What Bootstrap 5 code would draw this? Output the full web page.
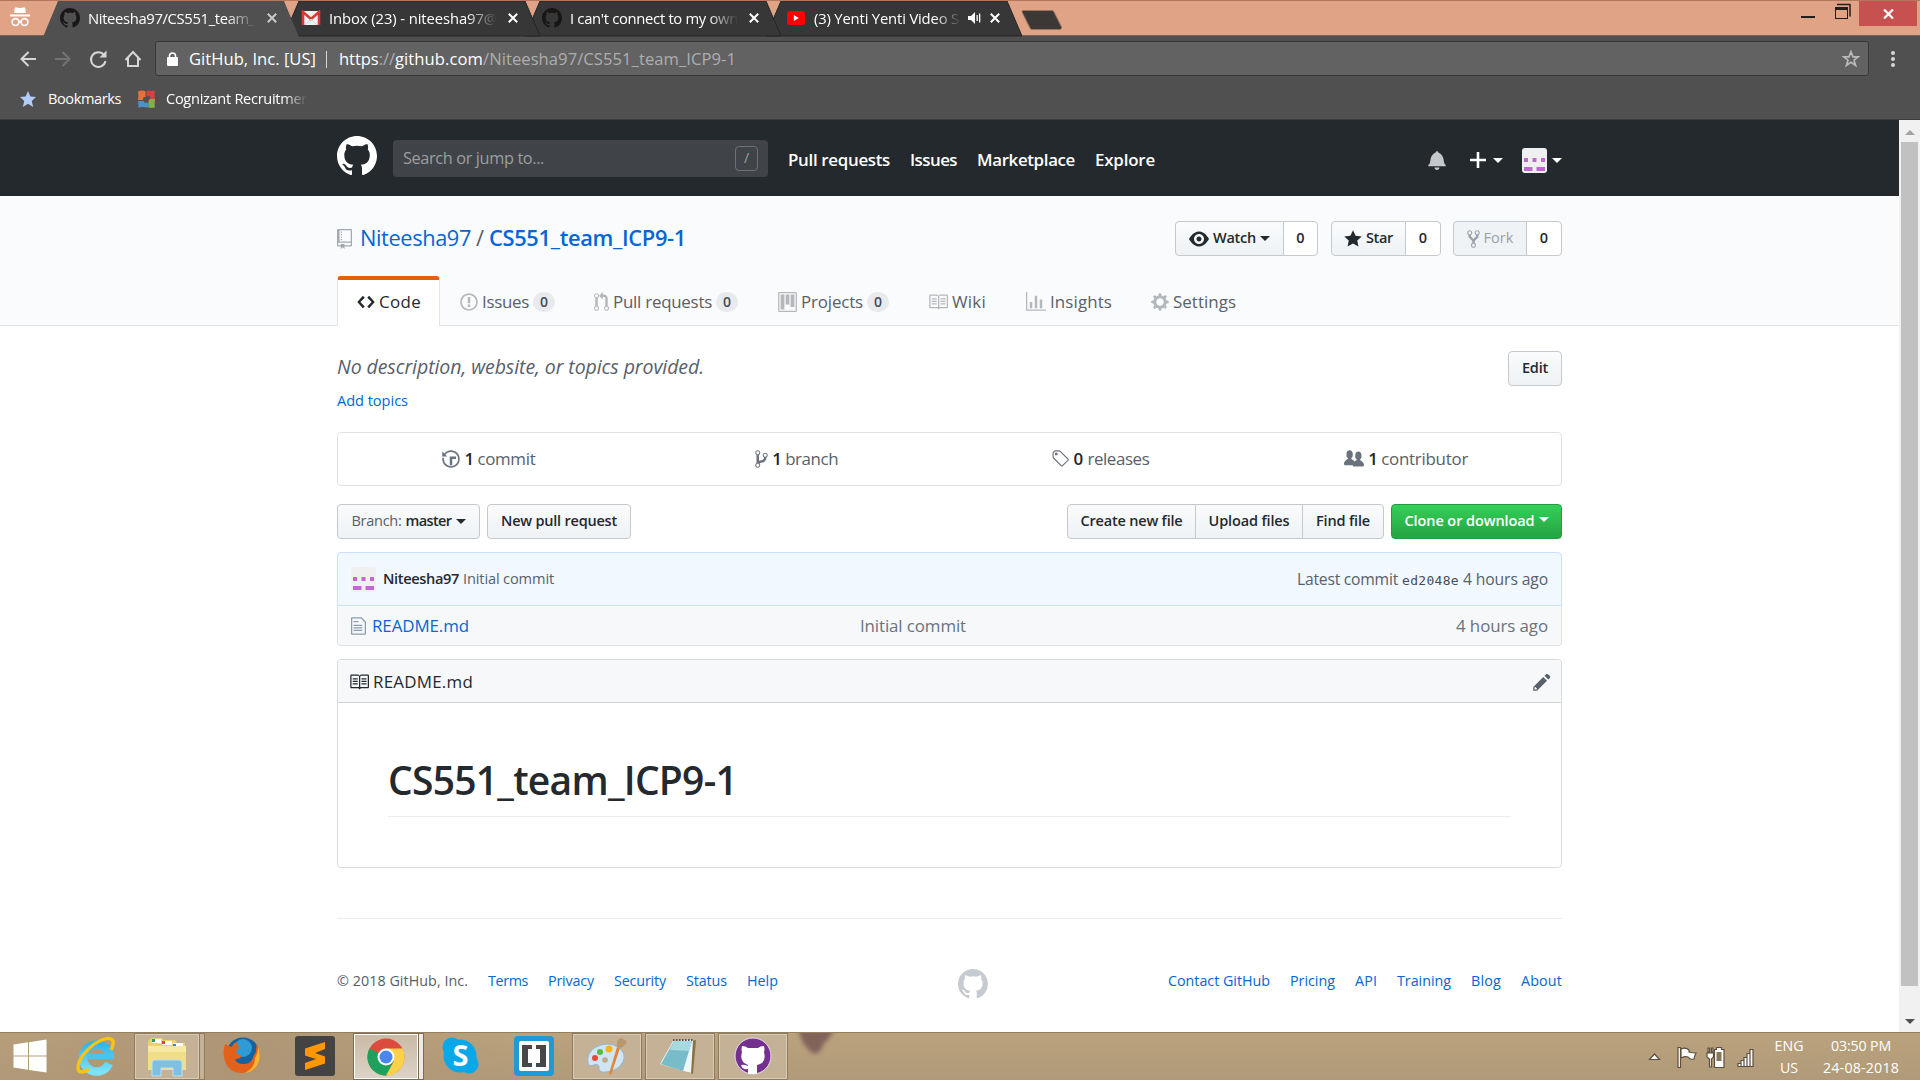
<!DOCTYPE html>
<html lang="en">
<head>
<meta charset="utf-8">
<meta name="viewport" content="width=device-width, initial-scale=1">
<title>Niteesha97/CS551_team_ICP9-1</title>
<link href="https://cdn.jsdelivr.net/npm/bootstrap@5.3.0/dist/css/bootstrap.min.css" rel="stylesheet">
<style>
  body{width:1920px;height:1080px;overflow:hidden;font-family:"Open Sans","Noto Sans",sans-serif;font-stretch:94%;font-size:17px;line-height:1.5;color:#24292e;background:#fff}
  a{text-decoration:none;color:#0366d6}
  svg{display:block;flex:none}
  .fit{display:inline-block;white-space:nowrap;flex:none}
  .semi{font-weight:600}
  .oct{fill:currentColor}
  .gap-20{gap:20px}
  .ms-3px{margin-left:3px}.ms-7{margin-left:7px}.ms-12{margin-left:12px}.ms-13{margin-left:13px}.me-7{margin-right:6px}
  .w35{width:35px}.w36{width:36px}.w54{width:54px}.w70{width:70px}.w74{width:74px}.w75{width:75px}.w82{width:82px}.w108{width:108px}.w109{width:109px}.w129{width:129px}.w143{width:143px}.w144{width:144px}.w171{width:171px}

  /* browser frame */
  .strip{height:36px;background:#e1a386;border-top:1px solid #b5775c;border-bottom:1px solid #7c6355}
  .ghost{width:43px;padding:5px 0 0 10px;flex:none}
  .ctab{width:256px;height:35px;margin-right:-15px;padding:0 22px 1px 17px;font-size:14.8px;color:#fff;position:relative;flex:none}
  .ctab>*{position:relative}
  .ctab .shape{position:absolute;left:0;top:0}
  .ctab .ico{width:28px;flex:none}
  .ctab .lbl{width:168px;overflow:hidden;white-space:nowrap;-webkit-mask-image:linear-gradient(90deg,#000 82%,transparent);flex:none}
  .ctab .lbl.short{width:147px}
  .newtab{width:42px;height:20px;margin:9px 0 0 14px}
  .winctl{height:25px;margin-right:3px}
  .closebtn{width:58px;height:25px;background:#c75050}
  .bar{height:48px;background:#505050;padding:5px 0 8px 20px;color:#fff}
  .bar .navbtns{margin-right:13px}
  .omni{width:1714px;height:35px;background:#626262;border:1px solid #373737;border-radius:3px;font-size:16.6px;padding:1px 0 0 11px}
  .omni .dim{color:#aeaeae}
  .omni .host{margin-left:10px}
  .omni .sep{margin:8px 12px 8px 10px;background:#fff;opacity:.75}
  .kebab{margin-left:22px}
  .marks{height:36px;background:#505050;color:#fff;font-size:14.6px;padding:0 0 5px 20px;border-bottom:1px solid #3c3c3c}
  .fade-end{-webkit-mask-image:linear-gradient(90deg,#000 84%,transparent);margin-left:10px}

  /* page */
  .view{height:912px}
  .pg{width:1899px}
  .wrap1225{width:1225px;margin-left:337px}
  .top-nav{height:76px;background:#24292e;color:#fff}
  .top-nav nav{font-size:16.9px;margin-left:20px}
  .jump{width:375px;height:37px;background:#404448;border-radius:4px;color:#9b9ea1;font-size:16.3px;padding:0 10px;margin-bottom:4px}
  .slashkey{width:23px;height:25px;border:1px solid #6d7174;border-radius:4px;font-size:14px;line-height:22px;text-align:center}
  .caret5{width:0;height:0;border:5px solid transparent;border-top-color:currentColor;border-bottom:0;flex:none}
  .me-face{margin-left:19px;margin-right:5px}
  .head{background:#fafbfc;height:130px;border-bottom:1px solid #e1e4e8}
  .title-row{padding-top:25px}
  .title-row h1{font-size:21.8px}
  .title-row .sl{margin:0 5px}
  .gb{height:35px;display:inline-flex;align-items:center;justify-content:center;border:1px solid #c5c9cd;border-radius:4px;background:linear-gradient(#fafbfc,#eff3f6 90%);font-size:14.5px;font-weight:600;color:#24292e;line-height:1}
  .gb.lj{border-radius:4px 0 0 4px}.gb.mj{border-radius:0;margin-left:-1px}.gb.rj{border-radius:0 4px 4px 0;margin-left:-1px}
  .gb.plain{background:#fff}
  .gb.off{background:#eff3f6;color:#9ba1a7}
  .gb.go{background:linear-gradient(#34d058,#28a745 90%);color:#fff;border-color:#269a42}
  .rtabs{height:49px}
  .rt{color:#586069;height:49px;font-size:16.9px;padding-top:3px;flex:none}
  .rt svg{color:#b5b8bb}
  .rt.on{width:103px;height:50px;border:1px solid #e1e4e8;border-top:4px solid #e36209;border-bottom:0;border-radius:4px 4px 0 0;background:#fff;color:#24292e;padding:0 0 2px 19px}
  .rt.on svg{color:#24292e}
  .rt-a{margin-left:20px}.rt-b{margin-left:39px}.rt-c{margin-left:40px}.rt-d{margin-left:39px}.rt-e{margin-left:40px}.rt-f{margin-left:39px}
  .cnt{width:22px;height:20px;border-radius:20px;background:#e8eaed;color:#444d56;font-size:14px;font-weight:600;line-height:19px;text-align:center}
  .muted5{color:#586069}.muted6{color:#6a737d}
  .desc{height:106px;padding-top:25px}
  .dline{font-size:19.5px;line-height:32px}
  .tline{font-size:14.6px;line-height:34px}
  .stats{height:54px;border:1px solid #dfe2e5;border-radius:4px;font-size:16.9px}
  .actions{padding:18px 0 13px}
  .tease{height:54px;background:#f1f8ff;border:1px solid #c8e1ff;border-radius:4px 4px 0 0;padding:0 13px;font-size:14.6px}
  .late{font-size:15.7px;padding-top:2px}
  .sha{font-family:"DejaVu Sans Mono",monospace;font-size:13px;color:#444d56}
  .filerow{height:40px;background:#f6f8fa;border:1px solid #dfe2e5;border-top:0;border-radius:0 0 4px 4px;padding:1px 13px 0;font-size:16.9px}
  .fname{width:488px}
  .rbox{height:209px;margin-top:13px;border:1px solid #d9dcdf;border-radius:4px}
  .rhead{height:43px;background:#f6f8fa;border-bottom:1px solid #d1d5da;padding:1px 10px 0 11px;font-size:16.9px;border-radius:4px 4px 0 0}
  .rtitle{margin:0 50px;height:114px;border-bottom:1px solid #eaecef;padding-top:51px;font-size:39px;line-height:52px}
  .foot{margin-top:50px;height:124px;font-size:14.3px;border-top:1px solid #eaecef}
  .flogo{margin-top:7px}
  .sbar{width:21px;height:912px;background:#f1f1f1}
  .thumb{width:17px;height:844px;background:#c1c1c1}

  /* taskbar */
  .task{height:48px;border-top:1px solid #94805f;background:radial-gradient(circle at 230px 40px,#ae9575,transparent 300px),linear-gradient(180deg,#baa27d,#b19a79);color:#fff}
  .slot{height:47px;flex:none}
  .slot.run{background:#c5b196;border:1px solid #8e7b60;box-shadow:inset 0 0 0 1px #d8cab4}
  .slot.live{background:linear-gradient(#c9baa4,#dcd3c7);border:1px solid #7d6b53;box-shadow:inset 0 0 0 1px #fff}
  .w66{width:66px}
  .edge{width:5px;height:47px;border:1px solid #8e7b60;border-left:0;background:#c5b196;flex:none}
  .edge.live2{background:#efe9e0;border-color:#7d6b53}
  .clock{font-size:14.2px;line-height:22px;text-align:center;padding-top:1px}
  .c1{margin-left:11px;width:44px}
  .c2{margin-left:10px;width:80px;margin-right:19px}
</style>
<script src="https://cdn.jsdelivr.net/npm/bootstrap@5.3.0/dist/js/bootstrap.bundle.min.js"></script>
</head>
<body>
<svg width="0" height="0" class="position-absolute">
  <symbol id="mark-gh" viewBox="0 0 16 16"><path fill-rule="evenodd" d="M8 0C3.58 0 0 3.58 0 8c0 3.54 2.29 6.53 5.47 7.59.4.07.55-.17.55-.38 0-.19-.01-.82-.01-1.49-2.01.37-2.53-.49-2.69-.94-.09-.23-.48-.94-.82-1.13-.28-.15-.68-.52-.01-.53.63-.01 1.08.58 1.23.82.72 1.21 1.87.87 2.33.66.07-.52.28-.87.51-1.07-1.78-.2-3.64-.89-3.64-3.95 0-.87.31-1.59.82-2.15-.08-.2-.36-1.02.08-2.12 0 0 .67-.21 2.2.82.64-.18 1.32-.27 2-.27.68 0 1.36.09 2 .27 1.53-1.04 2.2-.82 2.2-.82.44 1.1.16 1.92.08 2.12.51.56.82 1.27.82 2.15 0 3.07-1.87 3.75-3.65 3.95.29.25.54.73.54 1.48 0 1.07-.01 1.93-.01 2.2 0 .21.15.46.55.38A8.013 8.013 0 0 0 16 8c0-4.42-3.58-8-8-8z"/></symbol>
  <symbol id="repo" viewBox="0 0 12 16"><path fill-rule="evenodd" d="M4 9H3V8h1v1zm0-3H3v1h1V6zm0-2H3v1h1V4zm0-2H3v1h1V2zm8-1v12c0 .55-.45 1-1 1H6v2l-1.5-1.5L3 16v-2H1c-.55 0-1-.45-1-1V1c0-.55.45-1 1-1h10c.55 0 1 .45 1 1zm-1 10H1v2h2v-1h3v1h5v-2zm0-10H2v9h9V1z"/></symbol>
  <symbol id="book" viewBox="0 0 16 16"><path fill-rule="evenodd" d="M3 5h4v1H3V5zm0 3h4V7H3v1zm0 2h4V9H3v1zm11-5h-4v1h4V5zm0 2h-4v1h4V7zm0 2h-4v1h4V9zm2-6v9c0 .55-.45 1-1 1H9.5l-1 1-1-1H2c-.55 0-1-.45-1-1V3c0-.55.45-1 1-1h5.5l1 1 1-1H15c.55 0 1 .45 1 1zm-8 .5L7.5 3H2v9h6V3.5zm7-.5H9.5l-.5.5V12h6V3z"/></symbol>
  <symbol id="ident" viewBox="0 0 25 25"><rect width="25" height="25" rx="3" fill="#f0f0f0"/><path fill="#c266d6" d="M2 10h4v4H2zM10.500 10h4v4h-4zM19 10h4v4h-4zM2 19h8.500v4H2zM14.500 19H23v4h-8.500z"/></symbol>
  <symbol id="tabx" viewBox="0 0 10 10"><path d="M.8.8l8.400 8.400M9.200.8L.8 9.200" stroke="currentColor" stroke-width="2" fill="none"/></symbol>
</svg>

<!-- tab strip -->
<div class="strip d-flex">
  <div class="ghost"><svg width="20" height="22" viewBox="0 0 20 22" fill="#fff"><path d="M5 1.500h2.500l2.500.8 2.500-.8H15l1 5.500H4zM0 8.500h20v2H0z"/><g fill="none" stroke="#fff" stroke-width="1.600"><circle cx="5.500" cy="16" r="3.400"/><circle cx="14.500" cy="16" r="3.400"/><path d="M8.500 15.500h3"/></g></svg></div>
  <div class="ctab d-flex align-items-center z-3"><svg class="shape" width="256" height="36"><path d="M0 36L15 0H241L256 36Z" fill="#505050"/></svg>
    <span class="ico"><svg width="20" height="20" fill="#1b1717"><use href="#mark-gh"/></svg></span><span class="lbl"><span class="fit" data-w="167">Niteesha97/CS551_team_</span></span><svg class="ms-auto" width="10" height="10" color="#c8c8c8"><use href="#tabx"/></svg></div>
  <div class="ctab d-flex align-items-center z-2"><svg class="shape" width="256" height="36"><path d="M0 35L15 0H241L256 35Z" fill="#373737" stroke="#262626"/></svg>
    <span class="ico"><svg width="20" height="16" viewBox="0 0 20 16"><rect x="1" y="1" width="18" height="14" rx="1" fill="#f2f2f2"/><path d="M2 15V2l8 7 8-7v13" fill="none" stroke="#d93a31" stroke-width="2.600"/><path d="M4 15l6-6 6 6" fill="none" stroke="#d5d5d5"/></svg></span><span class="lbl"><span class="fit" data-w="168">Inbox (23) - niteesha97@</span></span><svg class="ms-auto" width="10" height="10"><use href="#tabx"/></svg></div>
  <div class="ctab d-flex align-items-center z-1"><svg class="shape" width="256" height="36"><path d="M0 35L15 0H241L256 35Z" fill="#373737" stroke="#262626"/></svg>
    <span class="ico"><svg width="20" height="20" fill="#181515"><use href="#mark-gh"/></svg></span><span class="lbl"><span class="fit" data-w="168">I can't connect to my own</span></span><svg class="ms-auto" width="10" height="10"><use href="#tabx"/></svg></div>
  <div class="ctab d-flex align-items-center"><svg class="shape" width="256" height="36"><path d="M0 35L15 0H241L256 35Z" fill="#373737" stroke="#262626"/></svg>
    <span class="ico ps-1"><svg width="18" height="14" viewBox="0 0 18 14"><rect width="18" height="14" rx="3" fill="#f00"/><path d="M6.800 4v6l5-3z" fill="#fff"/></svg></span><span class="lbl short ms-3px"><span class="fit" data-w="145">(3) Yenti Yenti Video S</span></span>
    <svg class="ms-7" width="13" height="12" viewBox="0 0 13 12" fill="#fff"><path d="M0 4h3l4-4v12L3 8H0zM8.500 3h1.300v6H8.500zM11 1.500h1.300v9H11z"/></svg><svg class="ms-auto" width="10" height="10"><use href="#tabx"/></svg></div>
  <svg class="newtab" viewBox="0 0 42 20"><path d="M2 .5h29q1.500 0 2 1.500l7.500 15q.5 2-1.500 2.500H11q-1.500 0-2-1.500L1 2Q.5.5 2 .5z" fill="#3b3836" stroke="#9a7260"/></svg>
  <div class="winctl ms-auto d-flex">
    <svg width="58" height="25" viewBox="0 0 58 25"><path d="M0 15h14v2H0z" fill="#1e1e1e"/><g fill="none" stroke="#1e1e1e"><rect x="34.500" y="6.500" width="12" height="11"/><path d="M34 7.500h13" stroke-width="3"/><path d="M36 3.500h13.500M49 3v12.500" stroke-width="1.500"/></g></svg>
    <div class="closebtn d-flex align-items-center justify-content-center"><svg width="11" height="10" viewBox="0 0 11 10"><path d="M1 .5l9 9M10 .5l-9 9" stroke="#fff" stroke-width="2.200"/></svg></div>
  </div>
</div>

<!-- address bar -->
<div class="bar d-flex align-items-center">
  <svg class="navbtns" width="122" height="20" viewBox="0 0 122 20" fill="none" stroke-width="2">
    <path d="M16 10H1.500M8.500 3l-7 7 7 7" stroke="#d6d6d6"/><path d="M35 10h14.500M42.500 3l7 7-7 7" stroke="#737373"/>
    <path d="M84 6a7.300 7.300 0 1 0 1.500 6" stroke="#d6d6d6"/><path d="M86.500 1.500v7h-7z" fill="#d6d6d6"/><path d="M105.500 11l7.500-8 7.500 8M108 9v8h10V9" stroke="#d6d6d6"/></svg>
  <div class="omni d-flex align-items-center">
    <svg width="12" height="14" viewBox="0 0 12 14"><rect y="5" width="11" height="9" rx="1" fill="#fff"/><path d="M2.500 6V4a3 3 0 0 1 6 0v2" fill="none" stroke="#fff" stroke-width="1.600"/></svg>
    <span class="fit host" data-w="127">GitHub, Inc. [US]</span>
    <span class="vr sep"></span>
    <span class="fit" data-w="56"><span>https</span><span class="dim">://</span></span><span class="fit" data-w="88">github.com</span><span class="fit dim" data-w="253">/Niteesha97/CS551_team_ICP9-1</span>
    <svg class="ms-auto me-2" width="18" height="18" viewBox="0 0 18 18"><path d="M9 1.800l2 5h5.200l-4.200 3.400 1.600 5.300L9 12.300l-4.600 3.200L6 10.200 1.800 6.800H7z" fill="none" stroke="#b9b9b9" stroke-width="1.700"/></svg>
  </div>
  <svg class="kebab" width="4" height="18" viewBox="0 0 4 18" fill="#d6d6d6"><circle cx="2" cy="3" r="2"/><circle cx="2" cy="9" r="2"/><circle cx="2" cy="15" r="2"/></svg>
</div>
<div class="marks d-flex align-items-center">
  <svg width="16" height="16" viewBox="0 0 14 14"><path d="M14 5.200l-4.900-.4L7 0 4.900 4.800 0 5.200l3.700 3.500L2.500 14 7 11.100 11.500 14l-1.200-5.300z" fill="#b3cdf7"/></svg>
  <span class="fit ms-12" data-w="73">Bookmarks</span>
  <svg class="ms-3" width="19" height="20" viewBox="0 0 20 20"><path d="M1 2q4-2 8 0v6H7l-1 3H1q1-4 0-9z" fill="#e2743a"/><path d="M10 1q5 1 9 0-1 4 0 9h-5V7h-4z" fill="#d5413c"/><path d="M13 10h6q-1 5 0 9-3 1-7 0v-6z" fill="#7fb04a"/><path d="M1 12h6l1 2h4v5q-6-1-11 0 1-3 0-7z" fill="#4a93c8"/></svg>
  <span class="fit fade-end" data-w="141">Cognizant Recruitmer</span>
</div>

<div class="view d-flex">
  <main class="pg">
    <!-- site header -->
    <header class="top-nav">
      <div class="wrap1225 d-flex align-items-center h-100 pt-1">
        <svg width="40" height="40" fill="#fff" class="mb-2"><use href="#mark-gh"/></svg>
        <div class="jump d-flex align-items-center ms-3"><span class="fit" data-w="141">Search or jump to...</span><span class="slashkey ms-auto">/</span></div>
        <nav class="d-flex semi gap-20"><span class="fit" data-w="102">Pull requests</span><span class="fit" data-w="47">Issues</span><span class="fit" data-w="98">Marketplace</span><span class="fit" data-w="60">Explore</span></nav>
        <div class="d-flex align-items-center ms-auto">
          <svg class="oct" width="18" height="20" viewBox="0 0 14 16" color="#c5c8ca"><path d="M14 12v1H0v-1l.73-.58c.77-.77.81-2.550 1.190-4.420C2.690 3.230 6 2 6 2c0-.55.45-1 1-1s1 .45 1 1c0 0 3.390 1.230 4.160 5 .38 1.880.42 3.660 1.190 4.420l.66.58H14zm-7 4c1.110 0 2-.89 2-2H5c0 1.110.89 2 2 2z"/></svg>
          <svg class="ms-4" width="16" height="16" viewBox="0 0 16 16"><path d="M8 0v16M0 8h16" stroke="#fff" stroke-width="2.600"/></svg><span class="caret5 ms-7"></span>
          <svg class="me-face" width="25" height="25"><use href="#ident"/></svg><span class="caret5"></span>
        </div>
      </div>
    </header>

    <!-- repository head -->
    <section class="head">
      <div class="wrap1225 d-flex flex-column justify-content-between h-100">
        <div class="title-row d-flex align-items-center">
          <svg class="oct" width="15" height="20" color="#a3a9af"><use href="#repo"/></svg>
          <h1 class="d-flex align-items-baseline mb-0 fw-normal ms-2"><a class="fit" data-w="111" href="#">Niteesha97</a><span class="muted5 sl">/</span><a class="fit semi" data-w="197" href="#">CS551_team_ICP9-1</a></h1>
          <div class="d-flex ms-auto">
            <span class="gb lj w109"><svg class="oct me-1" width="20" height="20" viewBox="0 0 16 16"><path fill-rule="evenodd" d="M8.060 2C3 2 0 8 0 8s3 6 8.060 6C13 14 16 8 16 8s-3-6-7.940-6zM8 12c-2.200 0-4-1.780-4-4 0-2.200 1.800-4 4-4 2.220 0 4 1.800 4 4 0 2.220-1.780 4-4 4zm2-4c0 1.110-.89 2-2 2-1.110 0-2-.89-2-2 0-1.110.89-2 2-2 1.110 0 2 .89 2 2z"/></svg><span class="fit" data-w="43">Watch</span><span class="caret5 ms-1"></span></span><span class="gb rj plain w35">0</span>
            <span class="gb lj w75 ms-13"><svg class="oct me-1" width="18" height="20" viewBox="0 0 14 16"><path d="M14 6l-4.900-.64L7 1 4.900 5.360 0 6l3.600 3.260L2.670 14 7 11.670 11.330 14l-.93-4.740z"/></svg><span class="fit" data-w="27">Star</span></span><span class="gb rj plain w36">0</span>
            <span class="gb lj off w74 ms-12"><svg class="oct me-1" width="13" height="20" viewBox="0 0 10 16"><path fill-rule="evenodd" d="M8 1a1.993 1.993 0 0 0-1 3.720V6L5 8 3 6V4.720A1.993 1.993 0 0 0 2 1a1.993 1.993 0 0 0-1 3.720V6.500l3 3v1.780A1.993 1.993 0 0 0 5 15a1.993 1.993 0 0 0 1-3.720V9.500l3-3V4.720A1.993 1.993 0 0 0 8 1zM2 4.200C1.340 4.200.8 3.650.8 3c0-.65.55-1.200 1.200-1.200.65 0 1.200.55 1.200 1.200 0 .65-.55 1.200-1.200 1.200zm3 10c-.66 0-1.200-.55-1.200-1.200 0-.65.55-1.200 1.200-1.200.65 0 1.200.55 1.200 1.200 0 .65-.55 1.200-1.200 1.200zm3-10c-.66 0-1.200-.55-1.200-1.200 0-.65.55-1.200 1.200-1.200.65 0 1.200.55 1.200 1.200 0 .65-.55 1.200-1.200 1.200z"/></svg><span class="fit fw-normal" data-w="30">Fork</span></span><span class="gb rj plain w36">0</span>
          </div>
        </div>
        <nav class="rtabs d-flex">
          <span class="rt on d-flex align-items-center"><svg class="oct me-1" width="18" height="20" viewBox="0 0 14 16"><path d="M9.500 3L8 4.500 11.500 8 8 11.500 9.500 13 14 8 9.500 3zm-5 0L0 8l4.500 5L6 11.500 2.500 8 6 4.500 4.500 3z"/></svg><span class="fit" data-w="42">Code</span></span>
          <span class="rt d-flex align-items-center rt-a"><svg class="oct me-1" width="18" height="20" viewBox="0 0 14 16"><path fill-rule="evenodd" d="M7 2.300c3.140 0 5.700 2.560 5.700 5.700s-2.560 5.700-5.700 5.700A5.710 5.710 0 0 1 1.300 8c0-3.140 2.560-5.700 5.700-5.700zM7 1C3.140 1 0 4.140 0 8s3.140 7 7 7 7-3.140 7-7-3.140-7-7-7zm1 3H6v5h2V4zm0 6H6v2h2v-2z"/></svg><span class="fit" data-w="47">Issues</span><span class="cnt ms-1">0</span></span>
          <span class="rt d-flex align-items-center rt-b"><svg class="oct me-1" width="15" height="20" viewBox="0 0 12 16"><path fill-rule="evenodd" d="M11 11.280V5c-.03-.78-.34-1.470-.94-2.060C9.460 2.350 8.780 2.030 8 2H7V0L4 3l3 3V4h1c.27.02.48.11.69.31.21.2.3.42.31.69v6.280A1.993 1.993 0 0 0 10 15a1.993 1.993 0 0 0 1-3.720zm-1 2.920c-.66 0-1.200-.55-1.200-1.200 0-.65.55-1.200 1.200-1.200.65 0 1.200.55 1.200 1.200 0 .65-.55 1.200-1.200 1.200zM4 3c0-1.110-.89-2-2-2a1.993 1.993 0 0 0-1 3.720v6.560A1.993 1.993 0 0 0 2 15a1.993 1.993 0 0 0 1-3.720V4.720c.59-.34 1-.98 1-1.720zm-.8 10c0 .66-.55 1.200-1.200 1.200-.65 0-1.200-.55-1.200-1.200 0-.65.55-1.200 1.200-1.200.65 0 1.200.55 1.200 1.200zM2 4.200C1.340 4.200.8 3.650.8 3c0-.65.55-1.200 1.200-1.200.65 0 1.200.55 1.200 1.200 0 .65-.55 1.200-1.200 1.200z"/></svg><span class="fit" data-w="99">Pull requests</span><span class="cnt ms-1">0</span></span>
          <span class="rt d-flex align-items-center rt-c"><svg class="oct me-1" width="19" height="20" viewBox="0 0 15 16"><path fill-rule="evenodd" d="M10 12h3V2h-3v10zm-4-2h3V2H6v8zm-4 4h3V2H2v12zm-1 1h13V1H1v14zM14 0H1a1 1 0 0 0-1 1v14a1 1 0 0 0 1 1h13a1 1 0 0 0 1-1V1a1 1 0 0 0-1-1z"/></svg><span class="fit" data-w="62">Projects</span><span class="cnt ms-1">0</span></span>
          <span class="rt d-flex align-items-center rt-d"><svg class="oct me-1" width="20" height="20"><use href="#book"/></svg><span class="fit" data-w="34">Wiki</span></span>
          <span class="rt d-flex align-items-center rt-e"><svg class="oct me-1" width="20" height="20" viewBox="0 0 16 16"><path d="M16 14v1H0V0h1v14h15zM5 13H3V8h2v5zm4 0H7V3h2v10zm4 0h-2V6h2v7z"/></svg><span class="fit" data-w="62">Insights</span></span>
          <span class="rt d-flex align-items-center rt-f"><svg class="oct me-1" width="18" height="20" viewBox="0 0 14 16"><path fill-rule="evenodd" d="M14 8.770v-1.600l-1.940-.64-.45-1.090.88-1.840-1.130-1.130-1.810.91-1.090-.45-.69-1.920h-1.600l-.63 1.940-1.110.45-1.840-.88-1.130 1.130.91 1.810-.45 1.090L0 7.230v1.590l1.940.64.45 1.090-.88 1.840 1.130 1.130 1.810-.91 1.090.45.69 1.920h1.590l.63-1.940 1.110-.45 1.840.88 1.130-1.130-.92-1.810.47-1.090L14 8.750v.02zM7 11c-1.660 0-3-1.340-3-3s1.340-3 3-3 3 1.340 3 3-1.340 3-3 3z"/></svg><span class="fit" data-w="63">Settings</span></span>
        </nav>
      </div>
    </section>

    <section class="wrap1225">
      <div class="d-flex justify-content-between desc">
        <div>
          <div class="muted5 fst-italic dline"><span class="fit" data-w="367">No description, website, or topics provided.</span></div>
          <div class="tline"><a class="fit" data-w="71" href="#">Add topics</a></div>
        </div>
        <span class="gb w54"><span class="fit" data-w="26">Edit</span></span>
      </div>

      <div class="stats d-flex muted5 text-center">
        <span class="col d-flex align-items-center justify-content-center"><svg class="oct me-1" width="18" height="20" viewBox="0 0 14 16" color="#6a737d"><path fill-rule="evenodd" d="M8 13H6V6h5v2H8v5zM7 1C4.810 1 2.870 2.020 1.590 3.590L0 2v4h4L2.500 4.500C3.550 3.170 5.170 2.300 7 2.300c3.140 0 5.700 2.560 5.700 5.700s-2.560 5.700-5.700 5.700A5.710 5.710 0 0 1 1.300 8c0-.34.03-.67.09-1H.08C.03 7.330 0 7.660 0 8c0 3.860 3.140 7 7 7s7-3.140 7-7-3.140-7-7-7z"/></svg><span class="fit semi text-body me-1" data-w="9">1</span><span class="fit me-1" data-w="58">commit</span></span>
        <span class="col d-flex align-items-center justify-content-center"><svg class="oct me-1" width="13" height="20" viewBox="0 0 10 16" color="#6a737d"><path fill-rule="evenodd" d="M10 5c0-1.110-.89-2-2-2a1.993 1.993 0 0 0-1 3.720v.3c-.02.52-.23.98-.63 1.380-.4.4-.86.61-1.380.63-.83.02-1.480.16-2 .45V4.720a1.993 1.993 0 0 0-1-3.720C.88 1 0 1.890 0 3a2 2 0 0 0 1 1.720v6.560c-.59.35-1 .99-1 1.720 0 1.110.89 2 2 2 1.110 0 2-.89 2-2 0-.53-.2-1-.53-1.360.09-.06.48-.41.59-.47.25-.11.56-.17.94-.17 1.050-.05 1.950-.45 2.750-1.250S8.950 7.770 9 6.730h-.02C9.590 6.370 10 5.730 10 5zM2 1.800c.66 0 1.200.55 1.200 1.200 0 .65-.55 1.200-1.200 1.200C1.350 4.200.8 3.650.8 3c0-.65.55-1.200 1.200-1.200zm0 12.410c-.66 0-1.200-.55-1.200-1.200 0-.65.55-1.200 1.200-1.200.65 0 1.200.55 1.200 1.200 0 .65-.55 1.200-1.200 1.200zm6-8c-.66 0-1.200-.55-1.200-1.200 0-.65.55-1.200 1.200-1.200.65 0 1.200.55 1.200 1.200 0 .65-.55 1.200-1.200 1.200z"/></svg><span class="fit semi text-body ms-0 me-1" data-w="9">1</span><span class="fit" data-w="53">branch</span></span>
        <span class="col d-flex align-items-center justify-content-center"><svg class="oct me-1" width="18" height="20" viewBox="0 0 14 16" color="#6a737d"><path fill-rule="evenodd" d="M7.730 1.730C7.260 1.260 6.620 1 5.960 1H3.500C2.130 1 1 2.130 1 3.500v2.470c0 .66.27 1.300.73 1.770l6.060 6.060c.39.39 1.020.39 1.410 0l4.590-4.590a.996.996 0 0 0 0-1.410L7.730 1.730zM2.380 7.090c-.31-.3-.47-.7-.47-1.130V3.500c0-.88.72-1.590 1.590-1.590h2.470c.42 0 .83.16 1.130.47l6.140 6.130-4.730 4.730-6.130-6.150zM3.010 3h2v2H3V3h.01z"/></svg><span class="fit semi text-body me-1" data-w="10">0</span><span class="fit pe-1" data-w="62">releases</span></span>
        <span class="col d-flex align-items-center justify-content-center"><svg class="oct me-1" width="20" height="20" viewBox="0 0 16 16" color="#6a737d"><path d="M16 12.999c0 .439-.45 1-1 1H7.995c-.539 0-.994-.447-.995-.999H1c-.54 0-1-.561-1-1 0-2.634 3-4 3-4s.229-.409 0-1c-.841-.621-1.058-.59-1-3 .058-2.419 1.367-3 2.500-3s2.442.58 2.500 3c.058 2.410-.159 2.379-1 3-.229.59 0 1 0 1s1.549.711 2.420 2.088C9.196 9.369 10 8.999 10 8.999s.229-.409 0-1c-.841-.62-1.058-.59-1-3 .058-2.419 1.367-3 2.500-3s2.437.581 2.495 3c.059 2.410-.158 2.380-1 3-.229.59 0 1 0 1s3.005 1.366 3.005 4"/></svg><span class="fit semi text-body me-1" data-w="9">1</span><span class="fit pe-1" data-w="87">contributor</span></span>
      </div>

      <div class="d-flex actions">
        <span class="gb w143"><span class="fit fw-normal muted5 me-1" data-w="50">Branch:</span><span class="fit" data-w="46">master</span><span class="caret5 ms-1"></span></span>
        <span class="gb w144 ms-7"><span class="fit" data-w="116">New pull request</span></span>
        <span class="gb lj w129 ms-auto"><span class="fit" data-w="102">Create new file</span></span><span class="gb mj w108"><span class="fit" data-w="81">Upload files</span></span><span class="gb rj w82"><span class="fit" data-w="54">Find file</span></span>
        <span class="gb go w171 ms-7"><span class="fit" data-w="130">Clone or download</span><span class="caret5 ms-1 mb-1"></span></span>
      </div>

      <div class="tease d-flex align-items-center">
        <svg width="25" height="25"><use href="#ident"/></svg>
        <span class="fit semi ms-7" data-w="76">Niteesha97</span><span class="fit muted5 ms-1" data-w="91">Initial commit</span>
        <span class="ms-auto d-flex align-items-baseline muted5 late"><span class="fit me-1" data-w="101">Latest commit</span><span class="fit sha me-1" data-w="57">ed2048e</span><span class="fit" data-w="85">4 hours ago</span></span>
      </div>
      <div class="filerow d-flex align-items-center muted6">
        <svg class="oct me-7" width="15" height="20" viewBox="0 0 12 16" color="#8a9db3"><path fill-rule="evenodd" d="M6 5H2V4h4v1zM2 8h7V7H2v1zm0 2h7V9H2v1zm0 2h7v-1H2v1zm10-7.500V14c0 .55-.45 1-1 1H1c-.55 0-1-.45-1-1V2c0-.55.45-1 1-1h7.500L12 4.500zM11 5L8 2H1v12h10V5z"/></svg>
        <span class="fname"><a class="fit" data-w="97" href="#">README.md</a></span><span class="fit" data-w="106">Initial commit</span><span class="fit ms-auto" data-w="92">4 hours ago</span>
      </div>

      <article class="rbox">
        <div class="rhead d-flex align-items-center"><svg class="oct me-1" width="20" height="20"><use href="#book"/></svg><span class="fit fw-medium" data-w="100">README.md</span><svg class="oct ms-auto muted5" width="18" height="20" viewBox="0 0 14 16"><path fill-rule="evenodd" d="M0 12v3h3l8-8-3-3-8 8zm3 2H1v-2h1v1h1v1zm10.300-9.300L12 6 9 3l1.300-1.300a.996.996 0 0 1 1.410 0l1.590 1.590c.39.39.39 1.020 0 1.410z"/></svg></div>
        <div class="rtitle semi"><span class="fit" data-w="349">CS551_team_ICP9-1</span></div>
      </article>

      <footer class="foot d-flex align-items-center justify-content-between">
        <div class="d-flex gap-20"><span class="fit muted5" data-w="131">© 2018 GitHub, Inc.</span><a class="fit" data-w="40" href="#">Terms</a><a class="fit" data-w="46" href="#">Privacy</a><a class="fit" data-w="52" href="#">Security</a><a class="fit" data-w="41" href="#">Status</a><a class="fit" data-w="31" href="#">Help</a></div>
        <svg class="flogo" width="30" height="30" fill="#c6cbd1"><use href="#mark-gh"/></svg>
        <div class="d-flex gap-20"><a class="fit" data-w="102" href="#">Contact GitHub</a><a class="fit" data-w="45" href="#">Pricing</a><a class="fit" data-w="22" href="#">API</a><a class="fit" data-w="54" href="#">Training</a><a class="fit" data-w="30" href="#">Blog</a><a class="fit" data-w="41" href="#">About</a></div>
      </footer>
    </section>
  </main>
  <aside class="sbar d-flex flex-column align-items-center">
    <svg width="10" height="22" viewBox="0 0 10 22"><path d="M0 15l5-5 5 5z" fill="#a3a3a3"/></svg><div class="thumb"></div>
    <svg class="mt-auto" width="10" height="22" viewBox="0 0 10 22"><path d="M0 9h10l-5 5z" fill="#505050"/></svg>
  </aside>
</div>

<!-- taskbar -->
<div class="task d-flex">
  <div class="slot"><svg width="60" height="47" viewBox="0 0 60 47" fill="#fff"><path d="M13.500 11.500L28 9.300V22.500H13.500zM29 9.200L46.500 6.500v16H29zM13.500 23.500H28v13.300L13.500 34.500zM29 23.500h17.500v16L29 37z"/></svg></div>
  <div class="slot"><svg width="74" height="47" viewBox="0 0 74 47"><defs><linearGradient id="ieb" x2="0" y2="1"><stop stop-color="#35b4ea"/><stop offset="1" stop-color="#7be3fb"/></linearGradient></defs>
    <path d="M49 30.500A13.500 13.500 0 1 1 50 23" fill="none" stroke="url(#ieb)" stroke-width="8.500"/><path d="M27 23.500h27" stroke="#4ac3ef" stroke-width="5.500"/>
    <path d="M51 17c5-10 1-14-9-10C31 11 18 25 18 35c0 5 5 5 11 1" fill="none" stroke="#f6c511" stroke-width="3.400"/></svg></div>
  <div class="slot run w66"><svg width="64" height="45" viewBox="0 0 64 45"><path d="M16 4h11l2 2h11l2 3h8v27H13V8q0-2 3-4z" fill="#e9d26e"/><path d="M17 5h9v4h-9zM27 7h10v4H27zM38 9h10v4H38z" fill="#fff"/><path d="M17 5h3v3h-3z" fill="#2ba05a"/><path d="M27 7h3v3h-3z" fill="#d14a32"/><path d="M38 10h3v3h-3z" fill="#2a8fd0"/><path d="M13 12h38v24H13z" fill="#f2de86"/><path d="M13 12h38v6H13z" fill="#f7e9a4"/><path d="M17 42V29q0-3 3-3h24q3 0 3 3v13h-9v-8H26v8z" fill="#7ebfe2" stroke="#b8e1f4"/></svg></div><div class="edge"></div>
  <div class="slot"><svg width="73" height="47" viewBox="0 0 73 47"><circle cx="38" cy="21" r="16.500" fill="#16629f"/><circle cx="38" cy="15" r="9" fill="#2f9ad6"/><path d="M20 11q-3 9 0 17 4 12 17 12 15 0 17-14 1-9-3-15 1 8-2 11-2 9-10 9-8 0-9-5 4 1 7-3-5-1-6-5l4-4q-3-1-3-5-4 1-5 5-3-1-7-3z" fill="#e4611c"/><path d="M53 13q3 7 1 15-3 10-14 12 10-5 10-15 3-4 3-12z" fill="#f8b62d"/></svg></div>
  <div class="slot"><svg width="75" height="47" viewBox="0 0 75 47"><rect x="17" y="3" width="40" height="40" rx="3" fill="#434343"/><path d="M27 15.500l20-6.500v7l-10 4 10 3.500v7L27 37v-7l11-4-11-3.500z" fill="#ff9800"/></svg></div>
  <div class="slot live w66"><svg width="64" height="45" viewBox="0 0 64 45"><circle cx="32" cy="23" r="18.500" fill="#dd4b3e"/><path d="M32 23L15.500 14.500A18.500 18.500 0 0 0 32 41.500L40 27z" fill="#1fa05d"/><path d="M32 14.500h16.500A18.500 18.500 0 0 1 32 41.500L40 27z" fill="#fdd04a"/><circle cx="32" cy="23" r="8.500" fill="#fff"/><circle cx="32" cy="23" r="6.500" fill="#4a86ee"/></svg></div><div class="edge live2"></div>
  <div class="slot"><svg width="74" height="47" viewBox="0 0 74 47"><circle cx="36" cy="23" r="16.500" fill="#0aa8e8"/><circle cx="28" cy="14" r="9.500" fill="#0aa8e8"/><circle cx="45" cy="31" r="9.500" fill="#0aa8e8"/><text x="36.500" y="33" font-size="29" font-weight="700" fill="#fff" text-anchor="middle" font-family="Open Sans">S</text></svg></div>
  <div class="slot"><svg width="74" height="47" viewBox="0 0 74 47"><rect x="16" y="3" width="40" height="40" rx="4" fill="#1f9ad7"/><rect x="21" y="8" width="30" height="30" rx="2" fill="#fff"/><path d="M24 12h10v4h-4v14h4v4H24zM48 12H38v4h4v14h-4v4h10z" fill="#474747"/></svg></div>
  <div class="slot run w70"><svg width="68" height="45" viewBox="0 0 68 45"><path d="M15 30q-2-12 8-17 12-6 22 0 9 6 5 15-5 9-17 10-8 1-7-5-1-4-5-2-4 2-6-1z" fill="#cfe5f3" stroke="#8fb6d2"/><circle cx="32" cy="26" r="2.800" fill="#bda98a"/><circle cx="22" cy="24" r="3" fill="#e14b3a"/><circle cx="27" cy="18" r="3" fill="#58b947"/><circle cx="36" cy="15" r="3.600" fill="#f9b41c"/><path d="M36 40l8-27 3 1-9 27z" fill="#e28434"/><path d="M44 13q-1-6 3-9 5 1 7 4-3 5-7 6z" fill="#b9976a"/></svg></div>
  <div class="slot run w70 ms-3px"><svg width="68" height="45" viewBox="0 0 68 45"><path d="M50 6l-3 34-6-2 4-31z" fill="#8a7342"/><path d="M27 7l20-1-2 33-31-9z" fill="#eef6f8"/><path d="M28 7l18 0-9 30-22-7z" fill="#79bcc9"/><path d="M28 7l18 0-3 10-19-1z" fill="#a7d9e1"/><path d="M27 6h20" stroke="#555" stroke-width="2" stroke-dasharray="1.500 1.500"/></svg></div>
  <div class="slot run w70 ms-3px"><svg width="68" height="45" viewBox="0 0 68 45"><circle cx="34" cy="22" r="18" fill="#74308f" stroke="#e7dff0"/><path d="M23 12q4 0 6 2h10q2-2 6-2 1 4 0 6 3 11-7 13v9h-9v-5q-6 1-7-4 3-1 7 1v-1q-9-3-6-13-1-2 0-6z" fill="#fff"/></svg></div>
  <svg width="56" height="47" viewBox="0 0 56 47"><defs><filter id="soft"><feGaussianBlur stdDeviation="2.200"/></filter></defs><path d="M10-4h36q-4 10-10 14-6 16-14 8-8-6-12-22z" fill="#6f4f50" opacity=".75" filter="url(#soft)"/></svg>
  <div class="ms-auto d-flex align-items-center">
    <svg width="108" height="22" viewBox="0 0 108 22" fill="#fff" stroke="#5c4f40" stroke-width="1.200"><path d="M1.500 13.500l5-5.500 5 5.500z"/><path d="M30 1.500h2.500v20H30zM33 3q5-2 8 1v2q3 1 7 1-2 4-2 6-4 1-6-2-3-1-7 1z"/><path d="M66.500 3.500h2V1.500h5v2h2.500v18h-9.500z"/><path d="M68.500 6h5v9h-5z" fill="#87745a" stroke="none"/><path d="M60 2h1.500v4H60zM63.500 2H65v4h-1.500zM59 7h6.500v4l-2 2v8h-2v-8L59 11z"/><path d="M90 17.500h3v3h-3zM93 14.500h3v6h-3zM96 11.500h3v9h-3zM99 7.500h3v13h-3zM102 3.500h3v17h-3z"/></svg>
    <div class="clock c1"><span class="fit" data-w="29">ENG</span><br><span class="fit" data-w="18">US</span></div>
    <div class="clock c2"><span class="fit" data-w="60">03:50 PM</span><br><span class="fit" data-w="76">24-08-2018</span></div>
  </div>
</div>
<script>
  // Track each label so that it fills the width given in data-w (px).
  document.querySelectorAll('.fit[data-w]').forEach(function (el) {
    var cs = getComputedStyle(el), pad = parseFloat(cs.paddingLeft) + parseFloat(cs.paddingRight);
    var range = document.createRange();
    range.selectNodeContents(el);
    var natural = range.getBoundingClientRect().width, target = +el.dataset.w;
    el.style.letterSpacing = (target - natural) / el.textContent.length + 'px';
    el.style.width = target + pad + 'px';
  });
</script>
</body>
</html>
